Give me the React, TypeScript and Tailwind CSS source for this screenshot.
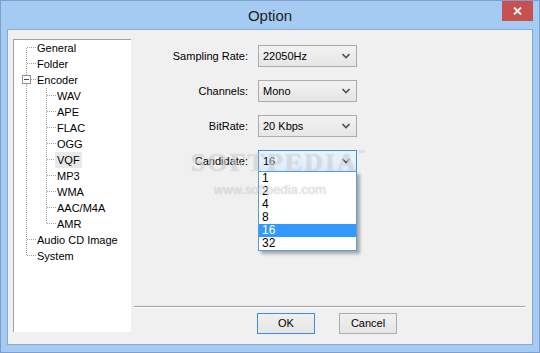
import React from 'react'

const rootItems = ['General', 'Folder']
const encoders = ['WAV', 'APE', 'FLAC', 'OGG', 'VQF', 'MP3', 'WMA', 'AAC/M4A', 'AMR']

function TreeLines() {
  const rows = 14
  const childRows = [3, 4, 5, 6, 7, 8, 9, 10, 11]
  const rootRows = [0, 1, 12, 13]
  return (
    <svg className="absolute left-0 top-0" width="117" height="292" shapeRendering="crispEdges">
      <g stroke="#a0a0a0" strokeWidth="1" strokeDasharray="1 1">
        <line x1="12.5" y1="8" x2="12.5" y2={13 * 16 + 8} />
        {rootRows.map((r) => (
          <line key={r} x1="13" y1={r * 16 + 7.5} x2="22" y2={r * 16 + 7.5} />
        ))}
        <line x1="17" y1={2 * 16 + 7.5} x2="22" y2={2 * 16 + 7.5} />
        <line x1="32.5" y1="48" x2="32.5" y2={11 * 16 + 8} />
        {childRows.map((r) => (
          <line key={r} x1="33" y1={r * 16 + 7.5} x2="42" y2={r * 16 + 7.5} />
        ))}
      </g>
      <rect x="8.5" y="35.5" width="8" height="8" fill="#fff" stroke="#919191" />
      <line x1="10" y1="39.5" x2="15" y2="39.5" stroke="#2b4f8c" />
      {rows > 0 && null}
    </svg>
  )
}

function Select({ value, focused }: { value: string; focused?: boolean }) {
  return (
    <div
      className={
        focused
          ? 'flex h-[22px] w-[99px] items-center justify-between border border-[#3c8fe0] bg-gradient-to-b from-[#ecf4fc] to-[#dcecfc] pl-[4px] pr-[6px]'
          : 'flex h-[22px] w-[99px] items-center justify-between border border-[#acacac] bg-gradient-to-b from-[#f2f2f2] to-[#e6e6e6] pl-[4px] pr-[6px]'
      }
    >
      <span>{value}</span>
      <svg width="8" height="6" viewBox="0 0 8 6">
        <path d="M0.5 1 L4 4.5 L7.5 1" fill="none" stroke="#555" strokeWidth="1.6" />
      </svg>
    </div>
  )
}

export default function App() {
  const options = ['1', '2', '4', '8', '16', '32']
  return (
    <div className="relative flex h-[353px] w-[540px] flex-col overflow-hidden border border-[#7c9fcf] bg-[#a6cbf3] font-['Liberation_Sans',Arial,sans-serif] text-[11px] text-black">
      {/* Title bar */}
      <div className="relative flex h-[28px] shrink-0 items-center justify-center">
        <span className="text-[15px] leading-none text-[#1e1e1e]">Option</span>
        <div className="absolute right-[6px] top-0 flex h-[20px] w-[31px] items-center justify-center bg-[#c75050]">
          <svg width="9" height="8" viewBox="0 0 9 8">
            <path d="M1 0.5 L8 7.5 M8 0.5 L1 7.5" stroke="#fff" strokeWidth="1.8" />
          </svg>
        </div>
      </div>

      {/* Client area */}
      <div className="mx-[6px] flex h-[316px] shrink-0 border border-[#8aa8d2] bg-[#f0f0f0]">
        {/* Tree */}
        <div className="relative ml-[5px] mt-[9px] h-[293px] w-[118px] shrink-0 border-l border-t border-[#a0a0a0] bg-white">
          <TreeLines />
          <div className="relative flex flex-col leading-[16px]">
            {rootItems.map((t) => (
              <div key={t} className="h-[16px] pl-[23px]">{t}</div>
            ))}
            <div className="h-[16px] pl-[23px]">Encoder</div>
            {encoders.map((t) => (
              <div key={t} className="h-[16px] pl-[41px]">
                <span className={t === 'VQF' ? 'inline-block h-[16px] bg-[#e8e8e8] px-[2px]' : 'inline-block h-[16px] px-[2px]'}>{t}</span>
              </div>
            ))}
            <div className="h-[16px] pl-[23px]">Audio CD Image</div>
            <div className="h-[16px] pl-[23px]">System</div>
          </div>
        </div>

        {/* Right side */}
        <div className="flex flex-1 flex-col">
          <div className="mt-[15px] grid grid-cols-[117px_99px] items-center gap-x-[10px] gap-y-[13px]">
            <div className="text-right">Sampling Rate:</div>
            <Select value="22050Hz" />
            <div className="text-right">Channels:</div>
            <Select value="Mono" />
            <div className="text-right">BitRate:</div>
            <Select value="20 Kbps" />
            <div className="text-right">Candidate:</div>
            <div className="relative">
              <Select value="16" focused />
              <div className="absolute left-0 top-[21px] z-10 flex w-[99px] flex-col border border-[#569de5] bg-white py-[0px] text-[12px] leading-[13px] shadow-[3px_3px_3px_rgba(0,0,0,0.3)]">
                {options.map((o) => (
                  <div key={o} className={o === '16' ? 'h-[13px] bg-[#3399ff] pl-[3px] text-white' : 'h-[13px] pl-[3px]'}>
                    {o}
                  </div>
                ))}
              </div>
            </div>
          </div>
          <div className="flex-1" />
          <div className="ml-[3px] mr-[7px] h-[2px] border-b border-t border-b-white border-t-[#a0a0a0]" />
          <div className="ml-[126px] mt-[5px] mb-[10px] flex gap-[24px]">
            <button className="h-[21px] w-[58px] border border-[#3c8fe0] bg-gradient-to-b from-[#f0f0f0] to-[#e5e5e5] text-[11px]">OK</button>
            <button className="h-[21px] w-[58px] border border-[#acacac] bg-gradient-to-b from-[#f0f0f0] to-[#e5e5e5] text-[11px]">Cancel</button>
          </div>
        </div>
      </div>

      {/* Watermark */}
      <div className="pointer-events-none absolute left-[190px] top-[149px] z-20 font-['Liberation_Serif',serif] text-[26px] font-bold leading-none tracking-[2px] text-white/50 [text-shadow:0_0_1px_rgba(0,0,0,0.25)]">
        SOFTPEDIA<span className="align-top text-[7px]">™</span>
      </div>
      <div className="pointer-events-none absolute left-[213px] top-[182px] z-20 text-[13px] leading-none text-white/60 [text-shadow:0_0_1px_rgba(0,0,0,0.3)]">
        www.softpedia.com
      </div>
    </div>
  )
}
